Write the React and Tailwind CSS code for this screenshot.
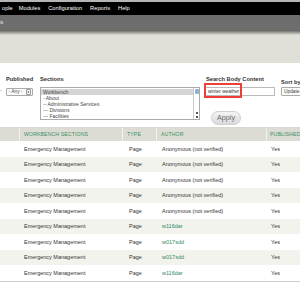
const rows = [
  ["Anonymous (not verified)", false],
  ["Anonymous (not verified)", false],
  ["Anonymous (not verified)", false],
  ["Anonymous (not verified)", false],
  ["Anonymous (not verified)", false],
  ["w116dar", true],
  ["w017sdd", true],
  ["w017sdd", true],
  ["w116dar", true],
];

const sections = [
  "Workbench",
  "- About",
  "-- Administrative Services",
  "--- Divisions",
  "--- Facilities",
];

const App = () => {
  return (
    <div className="w-[300px] h-[300px] overflow-hidden bg-white font-['Liberation_Sans',Arial,sans-serif] text-[#333]">
      {/* toolbar */}
      <div className="h-[2px] bg-[#b5b5b5]" />
      <div className="h-[13px] bg-black flex items-center text-[5.7px] text-white whitespace-nowrap">
        <span className="ml-[2px]">ople</span>
        <span className="ml-[6px]">Modules</span>
        <span className="ml-[8px]">Configuration</span>
        <span className="ml-[8px]">Reports</span>
        <span className="ml-[8px]">Help</span>
      </div>
      <div className="h-[15px] bg-[#6d6d6d] flex items-center text-[5.5px] text-[#e5e5e5]">
        <span className="-ml-[1px]">ts</span>
      </div>
      <div className="h-[5px] bg-gradient-to-b from-[#5e5e5a] to-[#e0e0d8]" />
      <div className="h-[28px] bg-[#e0e0d8]" />

      {/* filters */}
      <div className="relative h-[65px] border-b border-[#d8d8d0]">
        <div className="absolute left-[6px] top-[12px] text-[5.7px] font-bold">Published</div>
        <div className="absolute left-[40px] top-[12px] text-[5.7px] font-bold">Sections</div>
        <div className="absolute left-[206px] top-[12px] text-[5.7px] font-bold whitespace-nowrap">Search Body Content</div>
        <div className="absolute left-[281px] top-[15px] text-[5.7px] font-bold whitespace-nowrap">Sort by</div>

        <div className="absolute left-[0px] top-[24px] text-[5px] text-[#666]">-</div>

        <div className="absolute left-[6px] top-[25px] w-[27px] h-[8px] border border-[#aaa] rounded-[1px] bg-[#fafafa] flex items-center text-[4.6px] text-[#444]">
          <span className="ml-[2px]">- Any -</span>
          <span className="ml-auto mr-[1px] w-[5px] h-[6px] border border-[#999] rounded-[1px] flex items-center justify-center text-[3px] leading-none">⬍</span>
        </div>

        <div className="absolute left-[40px] top-[24px] w-[160px] h-[33px] border border-[#aaa] bg-white flex">
          <div className="flex-1 flex flex-col pt-[1px] text-[5px] leading-[6px] text-[#444]">
            {sections.map((s, i) => (
              <div key={s} className={i === 0 ? "bg-[#d4d4d4] pl-[2px]" : "pl-[2px]"}>{s}</div>
            ))}
          </div>
          <div className="w-[6px] border-l border-[#ccc] flex flex-col items-center justify-between py-[1px]">
            <div className="w-[4px] h-[5px] rounded-[1px] bg-[#8fb0d8]" />
            <div className="flex flex-col items-center gap-[2px]">
              <div className="w-[2px] h-[2px] bg-[#555]" />
              <div className="w-[2px] h-[2px] bg-[#555]" />
            </div>
          </div>
        </div>

        <div className="absolute left-[205px] top-[24px] w-[70px] h-[9px] border border-[#bbb] bg-white flex items-center text-[4.8px] text-[#333]">
          <span className="ml-[2px]">winter weather</span>
        </div>
        <div className="absolute left-[204px] top-[20px] w-[38px] h-[15px] border-2 border-[#ec4036]" />

        <div className="absolute left-[281px] top-[24px] w-[30px] h-[9px] border border-[#aaa] rounded-[1px] bg-[#fafafa] flex items-center text-[4.8px] text-[#444]">
          <span className="ml-[2px]">Update</span>
        </div>

        <div className="absolute left-[211px] top-[48px] w-[30px] h-[14px] rounded-full bg-gradient-to-b from-[#f4f4f4] to-[#dadada] border border-[#d0d0d0] flex items-center justify-center text-[7.2px] text-[#6a6a6a]">
          Apply
        </div>
      </div>

      {/* table */}
      <div className="grid grid-cols-[20px_103px_34px_110px_1fr] h-[13px] bg-[#dddcd4] text-[5.2px] text-[#3a9166] uppercase tracking-[0.1px] items-stretch">
        <div className="border-r border-[#f2f2ee]" />
        <div className="border-r border-[#f2f2ee] pl-[4px] flex items-center">Workbench Sections</div>
        <div className="border-r border-[#f2f2ee] pl-[4px] flex items-center">Type</div>
        <div className="border-r border-[#f2f2ee] pl-[4px] flex items-center">Author</div>
        <div className="pl-[3px] flex items-center">Published</div>
      </div>
      <div className="border-b border-[#cfcfc8]">
        {rows.map(([author, link], i) => (
          <div
            key={i}
            className={`grid grid-cols-[20px_103px_34px_110px_1fr] h-[15.5px] items-center text-[5.5px] ${i % 2 === 1 ? "bg-[#f3f3ed]" : "bg-white"}`}
          >
            <div />
            <div className="pl-[4px] whitespace-nowrap">Emergency Management</div>
            <div className="pl-[6px]">Page</div>
            <div className={`pl-[5px] whitespace-nowrap ${link ? "text-[#2f8a63]" : ""}`}>{author}</div>
            <div className="pl-[4px]">Yes</div>
          </div>
        ))}
      </div>
    </div>
  );
};

export default App;
